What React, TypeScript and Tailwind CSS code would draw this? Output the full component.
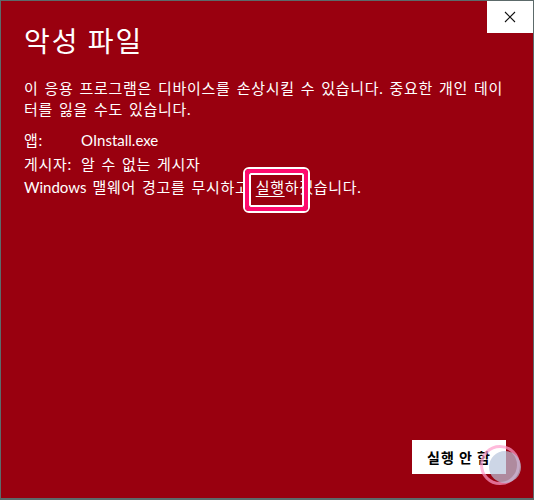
import React from 'react'

const LATIN = 'tracking-normal'

// SmartScreen style warning dialog
export default function App() {
  return (
    <div
      className="relative w-[534px] h-[500px] bg-[#5c6a6a] p-[1px] pb-[2px] overflow-hidden"
      style={{ fontFamily: 'Lato, "Noto Sans CJK KR", sans-serif' }}
    >
      <div className="relative w-full h-full bg-[#99000f] text-white flex flex-col">
        {/* title bar */}
        <div className="flex justify-end">
          <button className="w-[46px] h-[32px] bg-white flex items-center justify-center">
            <svg width="12" height="12" viewBox="0 0 12 12" stroke="#111" strokeWidth="1.1">
              <path d="M1 1 L11 11 M11 1 L1 11" />
            </svg>
          </button>
        </div>

        <div className="px-[23px] flex flex-col">
          <h1 className="text-[28px] leading-[30px] mt-[-8px] tracking-[2px]" style={{ fontFamily: '"Noto Sans CJK KR", sans-serif' }}>
            악성 파일
          </h1>

          <p className="mt-[23px] text-[15px] leading-[21px] tracking-[0.7px] [word-spacing:1.5px]">
            이 응용 프로그램은 디바이스를 손상시킬 수 있습니다. 중요한 개인 데이<br />
            터를 잃을 수도 있습니다.
          </p>

          <div className="mt-[9px] text-[15px] leading-[23.5px] tracking-[0.7px] [word-spacing:1.5px] flex flex-col">
            <div className="flex">
              <span className="w-[57px]">앱:</span>
              <span className={LATIN}>OInstall.exe</span>
            </div>
            <div className="flex">
              <span className="w-[57px]">게시자:</span>
              <span>알 수 없는 게시자</span>
            </div>
            <div>
              <span className={LATIN}>Windows</span> 맬웨어 경고를 무시하고 <span className="underline underline-offset-[3px]">실행</span>하겠습니다.
            </div>
          </div>
        </div>

        <div className="mt-auto flex justify-end pr-[27px] pb-[24px]">
          <button className="w-[94px] h-[34px] bg-white text-black text-[14px] font-bold tracking-[1px]" style={{ fontFamily: '"Noto Sans CJK KR", sans-serif' }}>
            실행 안 함
          </button>
        </div>
      </div>

      {/* highlight annotation over the link */}
      <div className="absolute left-[243px] top-[167px] w-[67px] h-[46px] border-2 border-white rounded-[6px]">
        <div className="w-full h-full border-4 border-[#ff0a6e] rounded-[4px]">
          <div className="w-full h-full border-2 border-white rounded-[2px]" />
        </div>
      </div>

      {/* click indicator */}
      <div className="absolute left-[480px] top-[445px] w-[40px] h-[40px] rounded-full border-[3px] border-[#ff9ccc]/70" />
      <div className="absolute left-[489px] top-[451px] w-[32px] h-[32px] rounded-full bg-[#b8c4dc]/70" />
    </div>
  )
}
